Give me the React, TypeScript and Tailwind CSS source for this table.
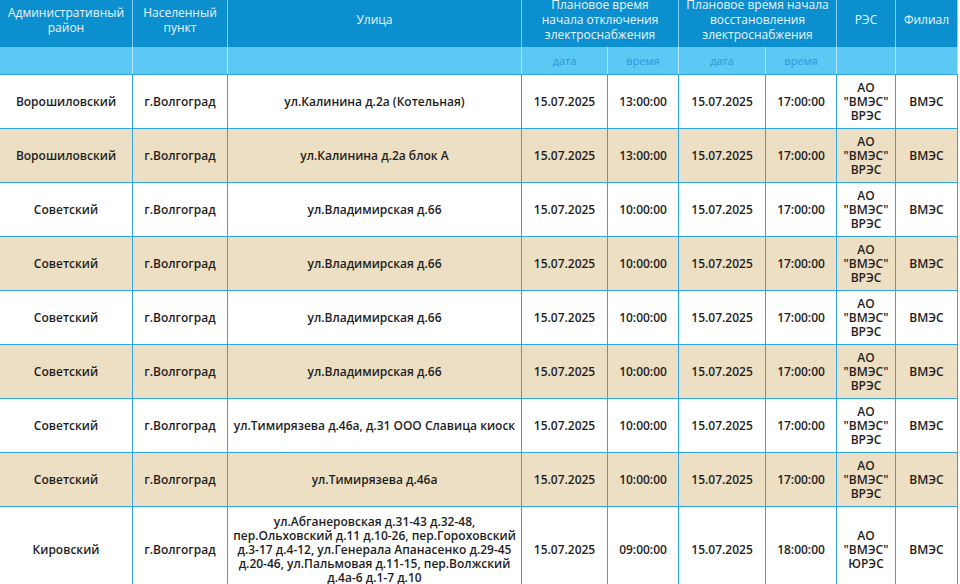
import React from "react";

type Row = {
  district: string;
  town: string;
  street: string;
  d1: string;
  t1: string;
  d2: string;
  t2: string;
  res: string;
  branch: string;
};

const rows: Row[] = [
  { district: "Ворошиловский", town: "г.Волгоград", street: "ул.Калинина д.2а (Котельная)", d1: "15.07.2025", t1: "13:00:00", d2: "15.07.2025", t2: "17:00:00", res: "ВРЭС", branch: "ВМЭС" },
  { district: "Ворошиловский", town: "г.Волгоград", street: "ул.Калинина д.2а блок А", d1: "15.07.2025", t1: "13:00:00", d2: "15.07.2025", t2: "17:00:00", res: "ВРЭС", branch: "ВМЭС" },
  { district: "Советский", town: "г.Волгоград", street: "ул.Владимирская д.66", d1: "15.07.2025", t1: "10:00:00", d2: "15.07.2025", t2: "17:00:00", res: "ВРЭС", branch: "ВМЭС" },
  { district: "Советский", town: "г.Волгоград", street: "ул.Владимирская д.66", d1: "15.07.2025", t1: "10:00:00", d2: "15.07.2025", t2: "17:00:00", res: "ВРЭС", branch: "ВМЭС" },
  { district: "Советский", town: "г.Волгоград", street: "ул.Владимирская д.66", d1: "15.07.2025", t1: "10:00:00", d2: "15.07.2025", t2: "17:00:00", res: "ВРЭС", branch: "ВМЭС" },
  { district: "Советский", town: "г.Волгоград", street: "ул.Владимирская д.66", d1: "15.07.2025", t1: "10:00:00", d2: "15.07.2025", t2: "17:00:00", res: "ВРЭС", branch: "ВМЭС" },
  { district: "Советский", town: "г.Волгоград", street: "ул.Тимирязева д.46а, д.31 ООО Славица киоск", d1: "15.07.2025", t1: "10:00:00", d2: "15.07.2025", t2: "17:00:00", res: "ВРЭС", branch: "ВМЭС" },
  { district: "Советский", town: "г.Волгоград", street: "ул.Тимирязева д.46а", d1: "15.07.2025", t1: "10:00:00", d2: "15.07.2025", t2: "17:00:00", res: "ВРЭС", branch: "ВМЭС" },
  { district: "Кировский", town: "г.Волгоград", street: "ул.Абганеровская д.31-43 д.32-48, пер.Ольховский д.11 д.10-26, пер.Гороховский д.3-17 д.4-12, ул.Генерала Апанасенко д.29-45 д.20-46, ул.Пальмовая д.11-15, пер.Волжский д.4а-6 д.1-7 д.10", d1: "15.07.2025", t1: "09:00:00", d2: "15.07.2025", t2: "18:00:00", res: "ЮРЭС", branch: "ВМЭС" },
];

const th1 = "border-x border-t border-x-[#7fcdf0] border-t-[#7fcdf0] bg-[#0b8fcf] text-[#e8f5fc] font-normal text-[12px] leading-[15px] text-center align-middle px-[4px] whitespace-nowrap";
const th2 = "border-x border-x-[#b5e4f8] border-b border-b-[#2fa6e3] bg-[#5cc8f4] text-[#2a9ad6] font-normal text-[11px] leading-[15px] text-center align-middle h-[28px]";
const td = "border border-[#2fa6e3] text-[#1e1e1e] font-semibold text-[12px] leading-[14px] text-center align-middle px-[4px] py-[4px]";

export default function App() {
  return (
    <div
      className="w-[960px] h-[584px] overflow-hidden bg-white"
      style={{ fontFamily: '"Open Sans", "Noto Sans", sans-serif' }}
    >
      <table className="table-fixed border-collapse w-[957px] -mt-[8px] -ml-[1px]">
        <colgroup>
          <col className="w-[133px]" />
          <col className="w-[95px]" />
          <col className="w-[294px]" />
          <col className="w-[86px]" />
          <col className="w-[71px]" />
          <col className="w-[87px]" />
          <col className="w-[71px]" />
          <col className="w-[59px]" />
          <col className="w-[62px]" />
        </colgroup>
        <thead>
          <tr className="h-[54px]">
            <th className={th1}>
              Административный
              <br />
              район
            </th>
            <th className={th1}>
              Населенный
              <br />
              пункт
            </th>
            <th className={th1}>Улица</th>
            <th className={th1} colSpan={2}>
              Плановое время
              <br />
              начала отключения
              <br />
              электроснабжения
            </th>
            <th className={th1} colSpan={2}>
              Плановое время начала
              <br />
              восстановления
              <br />
              электроснабжения
            </th>
            <th className={th1}>РЭС</th>
            <th className={th1}>Филиал</th>
          </tr>
          <tr>
            <th className={th2}></th>
            <th className={th2}></th>
            <th className={th2}></th>
            <th className={th2}>дата</th>
            <th className={th2}>время</th>
            <th className={th2}>дата</th>
            <th className={th2}>время</th>
            <th className={th2}></th>
            <th className={th2}></th>
          </tr>
        </thead>
        <tbody>
          {rows.map((r, i) => (
            <tr key={i} className={i % 2 === 1 ? "h-[54px] bg-[#eddfc3]" : "h-[54px] bg-white"}>
              <td className={td}>{r.district}</td>
              <td className={td}>{r.town}</td>
              <td className={td + " py-[8px]"}>{r.street}</td>
              <td className={td}>{r.d1}</td>
              <td className={td}>{r.t1}</td>
              <td className={td}>{r.d2}</td>
              <td className={td}>{r.t2}</td>
              <td className={td}>
                АО
                <br />
                "ВМЭС"
                <br />
                {r.res}
              </td>
              <td className={td}>{r.branch}</td>
            </tr>
          ))}
        </tbody>
      </table>
    </div>
  );
}
